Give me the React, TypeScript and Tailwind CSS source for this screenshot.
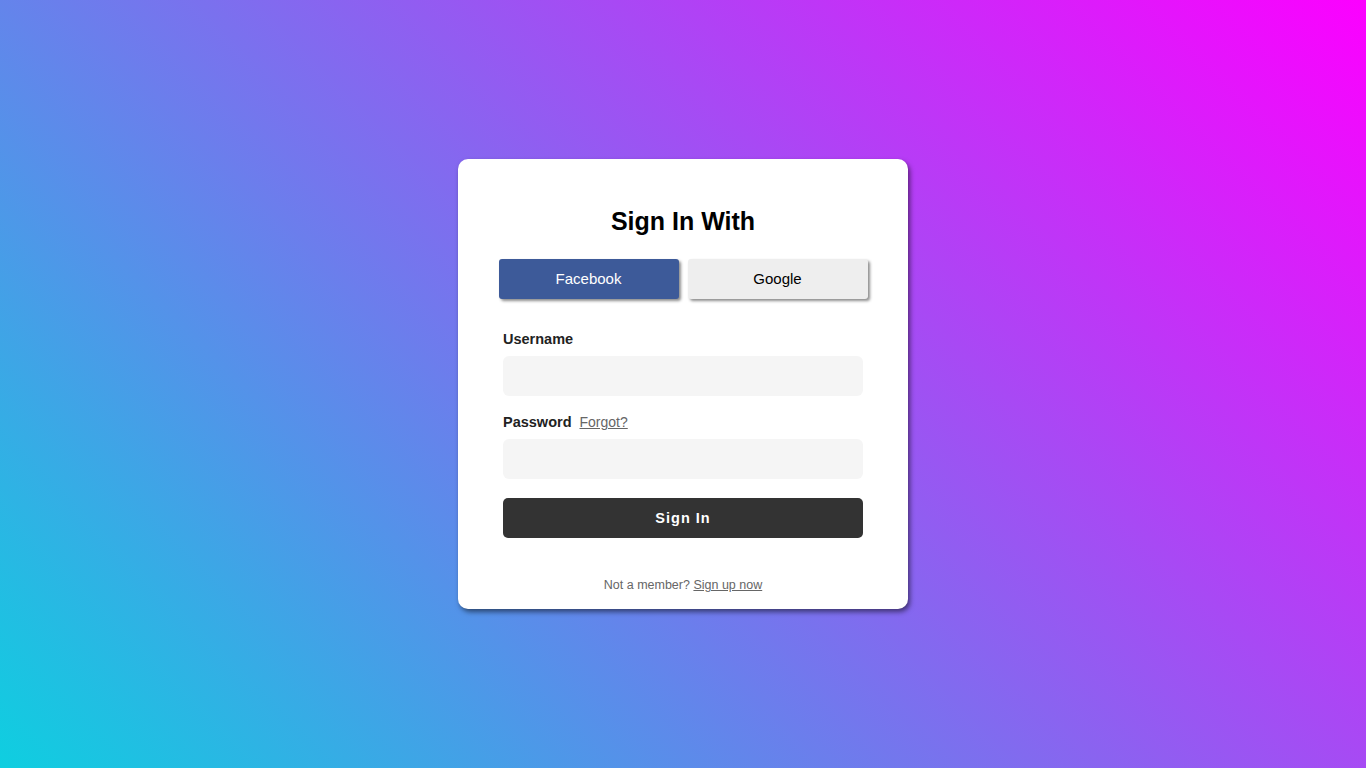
export default function App() {
  return (
    <div
      className="flex min-h-screen w-full items-center justify-center bg-[linear-gradient(45deg,#00dbde_-6%,#fc00ff_100%)]"
      style={{ fontFamily: '"Liberation Sans", Arial, sans-serif' }}
    >
      <div className="flex h-[450px] w-[450px] flex-col items-center rounded-[10px] bg-white px-[45px] pt-[46px] shadow-[2px_3px_5px_rgba(0,0,0,0.5)]">
        <h1 className="text-[25px] font-bold leading-[32px] text-black">Sign In With</h1>

        <div className="mt-[22px] flex w-[369px] gap-[9px]">
          <button className="h-[40px] w-[180px] rounded-[3px] bg-[#3d5a99] text-[15px] text-white shadow-[2px_2px_3px_rgba(0,0,0,0.45)]">
            Facebook
          </button>
          <button className="h-[40px] w-[180px] rounded-[3px] bg-[#eeeeee] text-[15px] text-black shadow-[2px_2px_3px_rgba(0,0,0,0.45)]">
            Google
          </button>
        </div>

        <form className="mt-[31px] flex w-[360px] flex-col">
          <label className="text-[14.5px] font-bold leading-[18px] text-[#222]">Username</label>
          <input className="mt-[8px] h-[40px] w-full rounded-[6px] bg-[#f5f5f5] px-3 outline-none" />

          <div className="mt-[17px] flex items-baseline gap-[8px] leading-[18px]">
            <label className="text-[14.5px] font-bold text-[#222]">Password</label>
            <a className="text-[14px] text-[#666] underline">Forgot?</a>
          </div>
          <input type="password" className="mt-[8px] h-[40px] w-full rounded-[6px] bg-[#f5f5f5] px-3 outline-none" />

          <button
            type="button"
            className="mt-[19px] h-[40px] w-full rounded-[5px] bg-[#333333] pt-[2px] text-[14.5px] font-bold tracking-[1px] text-white"
          >
            Sign In
          </button>
        </form>

        <p className="mt-[37px] text-[12.5px] leading-[20px] text-[#666]">
          Not a member? <a className="underline">Sign up now</a>
        </p>
      </div>
    </div>
  )
}
